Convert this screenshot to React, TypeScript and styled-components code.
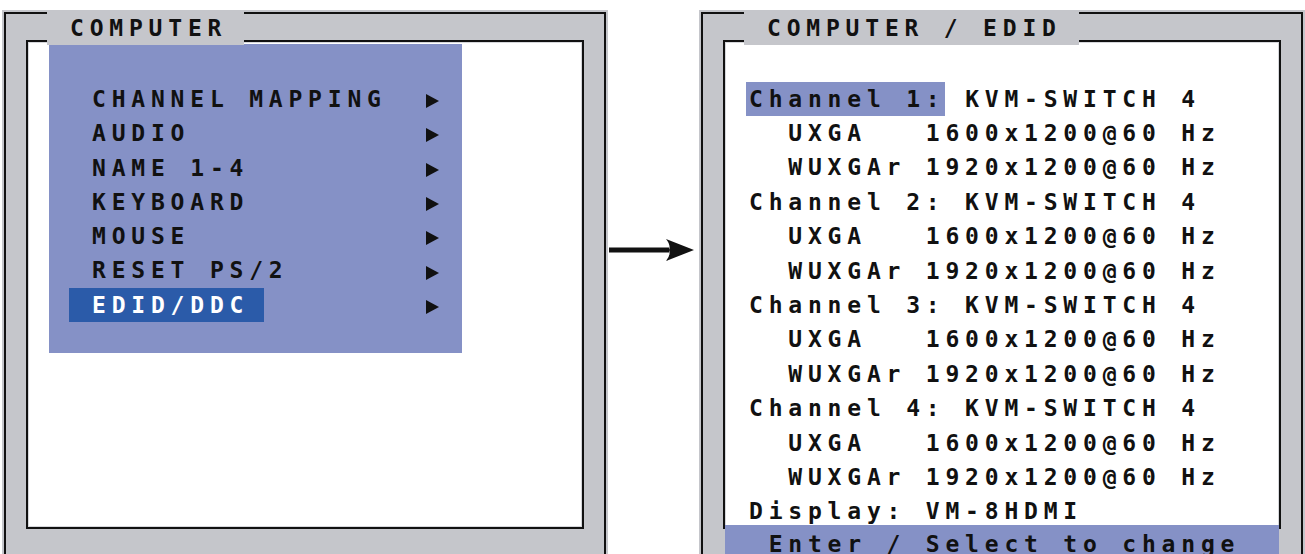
import React from 'react';
import styled, {createGlobalStyle} from 'styled-components';

const GlobalStyle = createGlobalStyle`
  html, body {
    margin: 0;
    padding: 0;
    background: #ffffff;
  }
`;

// OSD colours
const GRAY = '#c5c6cb';
const MENU_BLUE = '#8591c6';
const SELECT_BLUE = '#2b5ba9';
const INK = '#111111';

const menuItems = [
    'CHANNEL MAPPING',
    'AUDIO',
    'NAME 1-4',
    'KEYBOARD',
    'MOUSE',
    'RESET PS/2',
    'EDID/DDC',
];
const selectedItem = 'EDID/DDC';

type EdidLine = {highlight?: string; text: string};

const edidLines: EdidLine[] = [1, 2, 3, 4].flatMap((n) => [
    {highlight: n === 1 ? `Channel ${n}:` : undefined, text: n === 1 ? ' KVM-SWITCH 4' : `Channel ${n}: KVM-SWITCH 4`},
    {text: '  UXGA   1600x1200@60 Hz'},
    {text: '  WUXGAr 1920x1200@60 Hz'},
]);
edidLines.push({text: 'Display: VM-8HDMI'});

/**
 * Two OSD screens side by side
 */
export default function App() {
    return (
        <>
            <GlobalStyle />
            <Page>
                <Panel>
                    <Outer>
                        <Title>COMPUTER</Title>
                        <Screen>
                            <Menu>
                                {menuItems.map((item) => (
                                    <MenuRow key={item}>
                                        <MenuLabel $selected={item === selectedItem}>{item}</MenuLabel>
                                        <SubArrow />
                                    </MenuRow>
                                ))}
                            </Menu>
                        </Screen>
                    </Outer>
                </Panel>

                <ArrowSlot>
                    <svg width="87" height="22" viewBox="0 0 87 22">
                        <rect x="1" y="8.5" width="60" height="5" fill={INK} />
                        <path d="M58 0 Q63 6 61 11 Q63 16 58 22 L86 11 Z" fill={INK} />
                    </svg>
                </ArrowSlot>

                <Panel>
                    <Outer>
                        <Title>COMPUTER / EDID</Title>
                        <Screen>
                            <Lines>
                                {edidLines.map((line, i) => (
                                    <Line key={i}>
                                        {line.highlight && <Mark>{line.highlight}</Mark>}
                                        {line.text}
                                    </Line>
                                ))}
                            </Lines>
                        </Screen>
                        <StatusBar> Enter / Select to change</StatusBar>
                    </Outer>
                </Panel>
            </Page>
        </>
    );
}

const Page = styled.div`
  display: flex;
  align-items: flex-start;
  height: 554px;
  padding: 10px 0 0 2px;
  box-sizing: border-box;
  overflow: hidden;
  font-family: "DejaVu Sans Mono", "Liberation Mono", monospace;
  font-weight: bold;
  font-size: 23px;
  letter-spacing: 5.8px;
  color: ${INK};
`;

const Panel = styled.div`
  flex: 0 0 auto;
  width: 606px;
  height: 570px;
  padding: 2px;
  box-sizing: border-box;
  background: ${GRAY};
`;

const Outer = styled.div`
  position: relative;
  height: 100%;
  box-sizing: border-box;
  border: 2px solid ${INK};
  padding: 26px 20px 0 20px;
`;

// sits over the frame lines, like a fieldset legend
const Title = styled.div`
  position: absolute;
  top: -4px;
  left: 41px;
  padding: 2px 17px 0 23px;
  line-height: 33px;
  background: ${GRAY};
  white-space: pre;
`;

const Screen = styled.div`
  height: 489px;
  box-sizing: border-box;
  border: 2px solid ${INK};
  background: #ffffff;
  box-shadow: inset 0 0 0 1px #d6d7db;
`;

const Menu = styled.div`
  width: 413px;
  height: 309px;
  margin: 2px 0 0 21px;
  padding: 38px 23px 0 20px;
  box-sizing: border-box;
  background: ${MENU_BLUE};
`;

const MenuRow = styled.div`
  display: flex;
  align-items: center;
  justify-content: space-between;
  height: 34.3px;
`;

const MenuLabel = styled.span<{$selected?: boolean}>`
  display: block;
  line-height: 34.3px;
  padding: 0 15px 0 23px;
  white-space: pre;
  background: ${(p) => (p.$selected ? SELECT_BLUE : 'transparent')};
  color: ${(p) => (p.$selected ? '#ffffff' : INK)};
`;

const SubArrow = styled.span`
  width: 0;
  height: 0;
  margin-top: 4px;
  border-left: 13px solid ${INK};
  border-top: 7.5px solid transparent;
  border-bottom: 7.5px solid transparent;
`;

const ArrowSlot = styled.div`
  flex: 0 0 91px;
  padding-top: 229px;
  svg {
    display: block;
  }
`;

const Lines = styled.div`
  padding: 39.5px 0 0 21px;
`;

const Line = styled.div`
  line-height: 34.4px;
  padding-left: 3px;
  white-space: pre;
`;

const Mark = styled.span`
  display: inline-block;
  margin-left: -3px;
  padding-left: 3px;
  background: ${MENU_BLUE};
`;

const StatusBar = styled.div`
  margin: -4px 2px 0 2px;
  padding: 2px 0 0 24px;
  line-height: 34.4px;
  background: ${MENU_BLUE};
  white-space: pre;
`;
